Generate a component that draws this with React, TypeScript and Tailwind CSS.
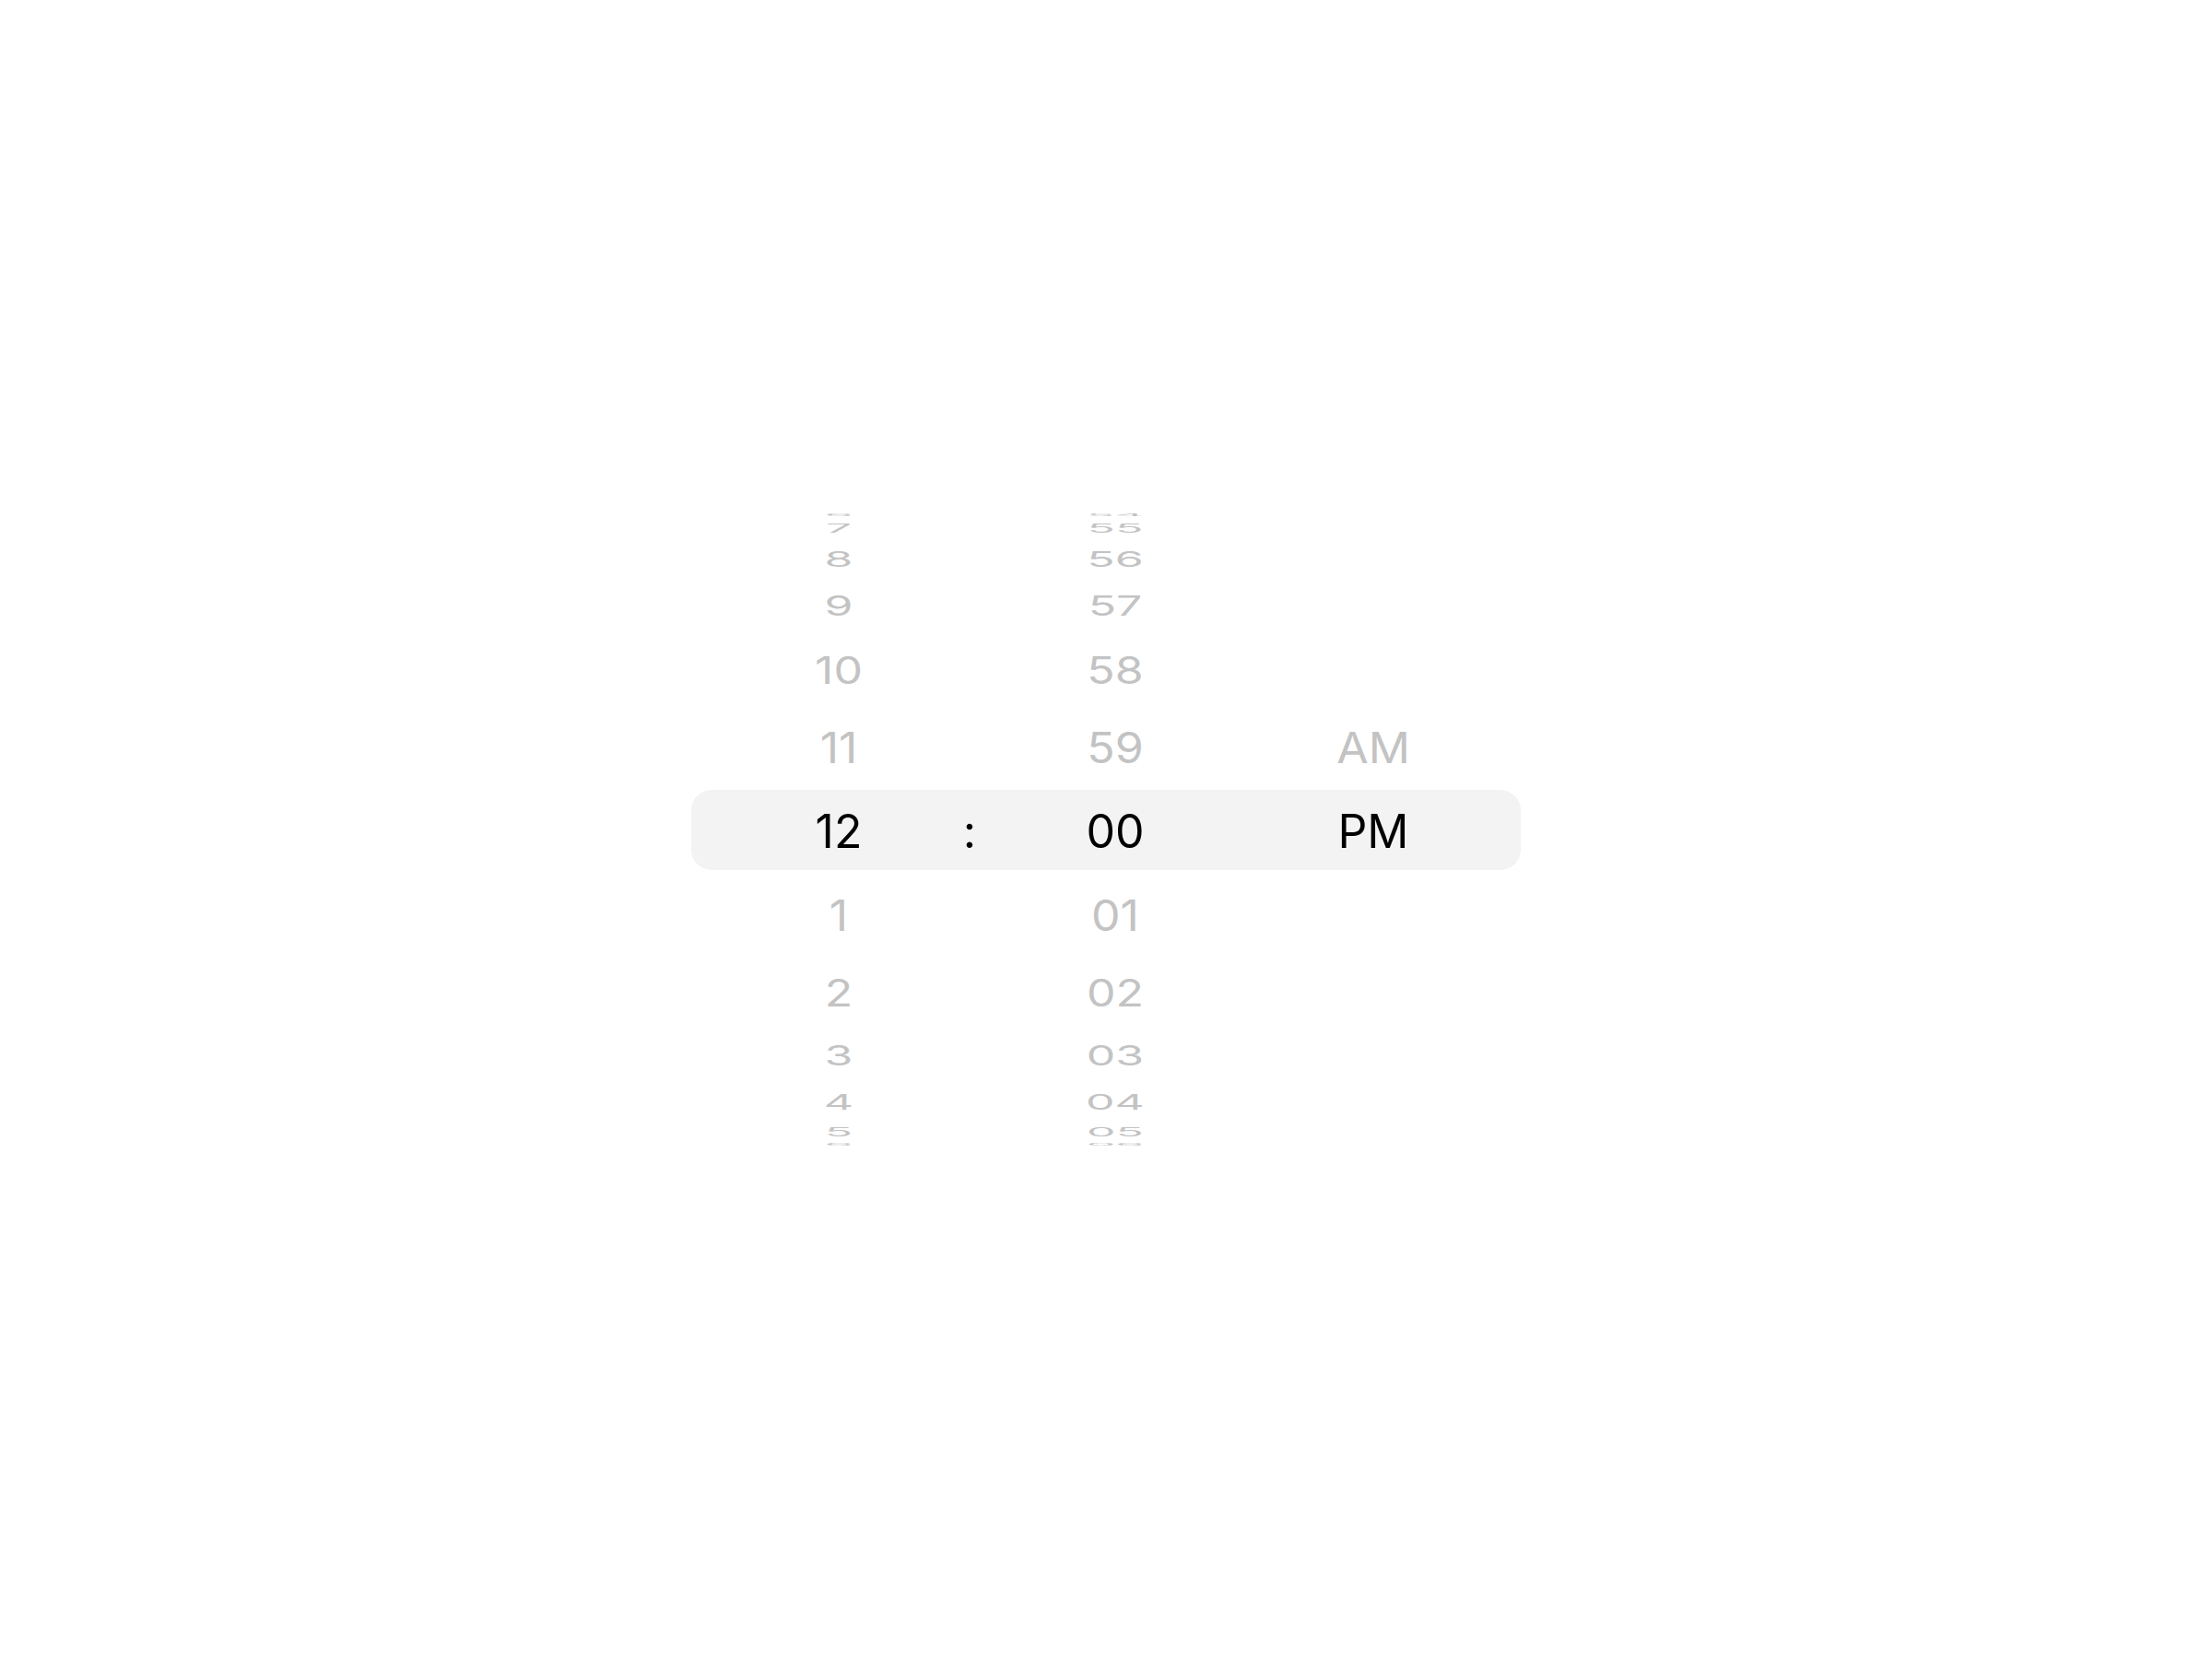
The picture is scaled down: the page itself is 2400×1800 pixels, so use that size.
// Wheel-style time picker (hours : minutes  AM/PM)

// distance of each row's text centre from the wheel centre, and its vertical squash
const OFFSETS = [0, 91, 175, 244.5, 296, 329, 343];
const SCALES = [1, 0.92, 0.81, 0.6, 0.46, 0.27, 0.07];
// the lower half of the wheel sits a touch differently
const LOWER_FIX = [0, 1, 1, -1, -2, -3, -3];
const EDGE = 350;
// Inter sits a little high in its line box
const NUDGE = 2;

const hourAt = (k: number) => {
  const h = ((12 + k - 1 + 12) % 12) + 1;
  return String(h);
};
const minuteAt = (k: number) => String((60 + k) % 60).padStart(2, "0");
const periodAt = (k: number) => (k === 0 ? "PM" : k === -1 ? "AM" : "");

// row boundaries sit halfway between text centres
const boundary = (i: number) => {
  if (i === 0) return 45.75;
  if (i >= 6) return EDGE;
  return (OFFSETS[i] + OFFSETS[i + 1]) / 2;
};

type CellsProps = { k: number; selected?: boolean };

const Cells = ({ k, selected }: CellsProps) => {
  const d = Math.abs(k);
  let transform = `translateY(${NUDGE}px)`;
  if (!selected) {
    const rowCentre = (boundary(d - 1) + boundary(d)) / 2;
    const shift = (OFFSETS[d] - rowCentre) * (k < 0 ? -1 : 1) + NUDGE + (k > 0 ? LOWER_FIX[d] : 0);
    transform = `translateY(${shift}px) scaleY(${SCALES[d]})`;
  }
  const tone = selected ? "text-black" : "text-[#c3c3c3]";
  const label = `block leading-none ${tone}`;

  return (
    <div className="flex w-full items-center">
      <div className="ml-[100px] flex w-[120px] justify-center">
        <span className={label} style={{ transform }}>
          {hourAt(k)}
        </span>
      </div>
      <div className="ml-[72px] flex w-[20px] justify-center">
        {selected && (
          <span className="block leading-none text-black" style={{ transform }}>
            :
          </span>
        )}
      </div>
      <div className="ml-[88px] flex w-[120px] justify-center">
        <span className={label} style={{ transform }}>
          {minuteAt(k)}
        </span>
      </div>
      <div className="ml-[150px] flex w-[140px] justify-center">
        <span className={label} style={{ transform }}>
          {periodAt(k)}
        </span>
      </div>
    </div>
  );
};

const App = () => {
  const rows = Array.from({ length: 13 }, (_, i) => i - 6);

  return (
    <div className="flex min-h-screen items-center justify-center bg-white">
      <div
        className="flex w-[900px] flex-col overflow-hidden text-[50px] font-normal"
        style={{ fontFamily: "Inter, 'Liberation Sans', sans-serif" }}
      >
        {rows.map((k) => {
          if (k === 0) {
            return (
              <div key={k} className="flex h-[91.5px] items-center">
                <div className="flex h-[87px] w-full items-center rounded-[22px] bg-[#f3f3f3]">
                  <Cells k={0} selected />
                </div>
              </div>
            );
          }
          const d = Math.abs(k);
          const height = boundary(d) - boundary(d - 1);
          return (
            <div key={k} className="flex items-center" style={{ height }}>
              <Cells k={k} />
            </div>
          );
        })}
      </div>
    </div>
  );
};

export default App;
